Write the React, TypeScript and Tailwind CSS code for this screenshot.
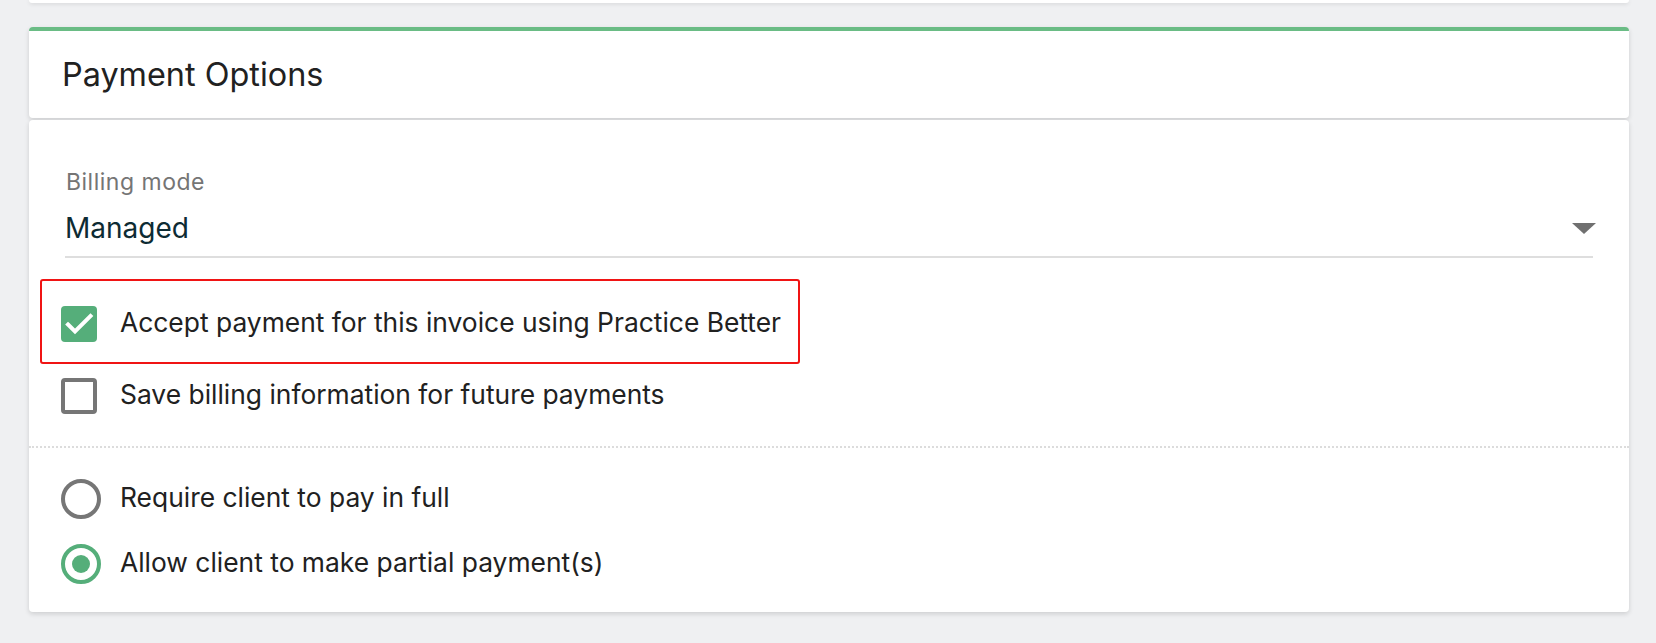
import { useState } from "react";

const font = { fontFamily: "Inter, 'Noto Sans', sans-serif" };

function CheckBox({ checked }: { checked: boolean }) {
  if (checked) {
    return (
      <span className="flex h-[36px] w-[36px] items-center justify-center rounded-[4px] bg-[#55ae7a]">
        <svg viewBox="0 0 36 36" className="h-[36px] w-[36px]">
          <path
            d="M7 18.5 L14 25.5 L29.5 10"
            fill="none"
            stroke="#fff"
            strokeWidth="4"
            strokeLinecap="square"
          />
        </svg>
      </span>
    );
  }
  return (
    <span className="block h-[36px] w-[36px] rounded-[4px] border-[4px] border-[#767676]" />
  );
}

function Radio({ checked }: { checked: boolean }) {
  return (
    <span
      className={
        checked
          ? "flex h-[40px] w-[40px] items-center justify-center rounded-full border-[4px] border-[#55ae7a]"
          : "flex h-[40px] w-[40px] items-center justify-center rounded-full border-[4px] border-[#767676]"
      }
    >
      {checked && <span className="h-[18px] w-[18px] rounded-full bg-[#55ae7a]" />}
    </span>
  );
}

function Row({ icon, label }: { icon: React.ReactNode; label: string }) {
  return (
    <div className="flex h-[40px] items-center">
      <div className="flex w-[40px] items-center">{icon}</div>
      <span className="mb-[5px] ml-[19px] text-[26.4px] leading-[32px] text-[#212121]">
        {label}
      </span>
    </div>
  );
}

export default function App() {
  const [mode] = useState("Managed");

  return (
    <div className="min-h-[643px] bg-[#eff0f2] pl-[29px] pr-[27px]" style={font}>
      {/* bottom of the card above */}
      <div className="h-[3px] rounded-b-[4px] bg-white shadow-[0_1px_4px_rgba(0,0,0,0.12)]" />

      <div className="mt-[24px]">
        {/* header */}
        <div className="flex h-[91px] items-center rounded-[4px] border-t-4 border-[#6abc85] bg-white pl-[33px] shadow-[0_2px_5px_rgba(0,0,0,0.14)]">
          <h2 className="text-[32.4px] font-normal leading-[38px] text-[#212121]">
            Payment Options
          </h2>
        </div>

        {/* body */}
        <div className="mt-[2px] rounded-[4px] bg-white pb-[28px] shadow-[0_2px_5px_rgba(0,0,0,0.14)]">
          <div className="px-[36px] pt-[50px]">
            <div className="h-[24px] pl-[1px] text-[23px] leading-[24px] tracking-[0.5px] text-[#757575]">
              Billing mode
            </div>
            <div className="mt-[18px] flex h-[32px] items-center justify-between">
              <span className="text-[28px] leading-[32px] text-[#0d2b33]">{mode}</span>
              <svg viewBox="0 0 24 11" className="mr-[-3px] h-[11px] w-[24px]">
                <path d="M0 0 H24 L12 11 Z" fill="#707070" />
              </svg>
            </div>
            <div className="mt-[12px] h-[2px] bg-[#dedede]" />
          </div>

          <div className="px-[32px]">
            <div className="relative mt-[46px]">
              <div className="pointer-events-none absolute -left-[21px] -top-[25px] h-[85px] w-[760px] rounded-[3px] border-2 border-[#f01414]" />
              <Row
                icon={<CheckBox checked />}
                label="Accept payment for this invoice using Practice Better"
              />
            </div>
            <div className="mt-[32px]">
              <Row
                icon={<CheckBox checked={false} />}
                label="Save billing information for future payments"
              />
            </div>
          </div>

          <div className="mt-[30px] border-t-2 border-dotted border-[#dcdcdc]" />

          <div className="px-[32px] pt-[31px]">
            <Row icon={<Radio checked={false} />} label="Require client to pay in full" />
            <div className="mt-[25px]">
              <Row
                icon={<Radio checked />}
                label="Allow client to make partial payment(s)"
              />
            </div>
          </div>
        </div>
      </div>
    </div>
  );
}
